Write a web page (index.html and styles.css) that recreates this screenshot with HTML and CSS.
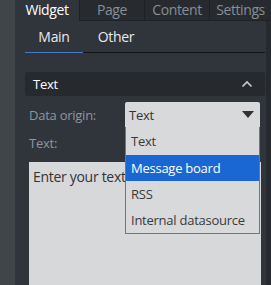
FILE: index.html
```html
<!DOCTYPE html>
<html lang="en">
<head>
  <meta charset="UTF-8">
  <title>Widget editor</title>
  <link rel="stylesheet" href="styles.css">
</head>
<body>
<div class="app">
  <!-- top tabs -->
  <div class="tabs">
    <div class="tab active">Widget</div>
    <div class="tab">Page</div>
    <div class="tab">Content</div>
    <div class="tab">Settings</div>
  </div>

  <div class="body">
    <div class="panel">
      <div class="subtabs">
        <div class="subtab active">Main</div>
        <div class="subtab">Other</div>
      </div>

      <div class="section">
        <span>Text</span>
        <svg class="chev" width="12" height="8" viewBox="0 0 12 8"><path d="M1.5 6.5L6 2l4.5 4.5" fill="none" stroke="#c9ccd0" stroke-width="1.6"/></svg>
      </div>

      <div class="row">
        <label>Data origin:</label>
        <div class="select">
          <span>Text</span>
          <svg class="arrow" width="12" height="7" viewBox="0 0 12 7"><path d="M0 0h12L6 7z" fill="#2f3236"/></svg>
          <ul class="menu">
            <li>Text</li>
            <li class="sel">Message board</li>
            <li>RSS</li>
            <li>Internal datasource</li>
          </ul>
        </div>
      </div>

      <div class="row lbl">
        <label>Text:</label>
      </div>

      <div class="textarea">Enter your text h</div>
    </div>
    <div class="scroll"></div>
  </div>
</div>
</body>
</html>
```

FILE: styles.css
```css
:root{
  --c-side:#40454a; --c-panel:#30343b; --c-tab:#272b30; --c-head:#262a2f;
  --c-light:#d8d9db; --c-label:#8d97a2; --c-blue:#1a67d4;
}
html,body{margin:0;height:100%;overflow:hidden}
body{
  background:var(--c-side);
  font-family:"Open Sans","Noto Sans",sans-serif;font-size:13px;letter-spacing:-.25px;color:#e6e8ea
}
.app{margin-left:15px;height:100%;display:flex;flex-direction:column;background:var(--c-panel)}

/* top tabs */
.tabs{display:flex;height:22px;background:var(--c-tab)}
.tab{
  width:64px;flex:none;text-align:center;line-height:20px;font-size:14px;letter-spacing:-.4px;
  color:#868e96;border-left:1px solid #1d2024;border-bottom:1px solid #1d2024
}
.tab:first-child{border-left:none}
.tab:last-child{flex:1}
.tab.active{background:var(--c-panel);color:#fff;border-bottom-color:var(--c-panel)}

.body{flex:1;display:flex}
.panel{flex:1;padding:0 0 0 10px;position:relative}
.scroll{width:5px;background:#262a2f}

/* sub tabs */
.subtabs{display:flex;height:31px;border-bottom:1px solid #111316;margin-right:1px}
.subtab{width:58px;text-align:center;line-height:32px;font-size:14px;letter-spacing:-.3px;color:#e8eaec}
.subtab + .subtab{width:66px}
.subtab.active{box-shadow:inset 0 -1px 0 #4a7bc8;margin-bottom:-1px;height:32px}

.section{
  margin:19px 1px 0 0;height:24px;background:var(--c-head);border-radius:3px;
  display:flex;align-items:center;justify-content:space-between;padding:0 12px 0 8px;
  color:#fff
}

.row{display:flex;align-items:center;margin:6px 0 0 4px;height:26px}
.row label{width:96px;color:var(--c-label)}
.row.lbl{margin-top:0;padding-top:2px}

.select{
  position:relative;width:135px;height:26px;background:var(--c-light);
  border-radius:2px 2px 0 0;border-bottom:1px solid #6f7378;box-sizing:border-box;
  display:flex;align-items:center;justify-content:space-between;padding:0 6px 0 4px;
  color:#333
}
.menu{
  position:absolute;left:0;right:0;top:25px;margin:0;padding:0;list-style:none;
  background:var(--c-light);border:1px solid #72767b;border-top:none;z-index:5
}
.menu li{height:26px;line-height:26px;padding-left:5px;color:#3a3a3a}
.menu li:first-child{height:28px;line-height:29px}
.menu li.sel{background:var(--c-blue);color:#fff}

.textarea{
  margin:6px 5px 0 4px;height:140px;background:#d7d8da;color:#333;
  padding:5px 4px;box-sizing:border-box;font-size:14px;letter-spacing:-.3px
}
```
